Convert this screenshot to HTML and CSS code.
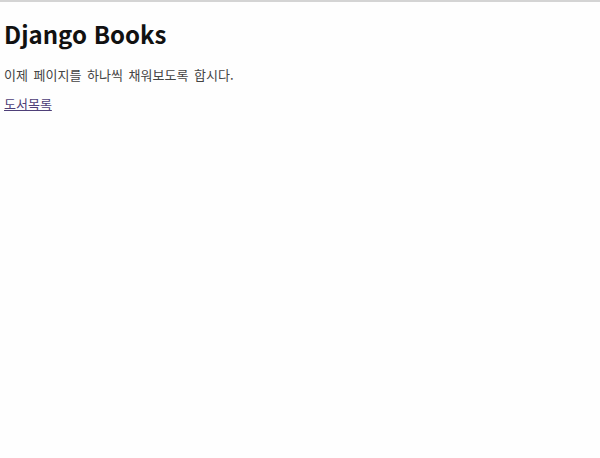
FILE: index.html
```html
<!DOCTYPE html>
<html lang="ko">
<head>
    <meta charset="UTF-8">
    <title>Django Books</title>
    <link rel="stylesheet" href="styles.css">
</head>
<body>
    <div class="page">
        <h1 class="title">Django Books</h1>
        <p class="intro">이제 페이지를 하나씩 채워보도록 합시다.</p>
        <a class="book-link" href="#">도서목록</a>
    </div>
</body>
</html>
```

FILE: styles.css
```css
body {
    margin: 0;
    background-color: #fefefe;
    border-top: 2px solid #d4d4d4;
    font-family: "Noto Sans CJK KR", "Noto Sans", sans-serif;
}
.page {
    padding: 0 4px;
}
.title {
    font-size: 24px;
    font-weight: bold;
    color: #111;
    margin: 14px 0 14px;
}
.intro {
    font-size: 13px;
    word-spacing: 2px;
    color: #444;
    margin: 0 0 6px;
}
.book-link {
    font-size: 13px;
    color: #4e3f78;
}
```
